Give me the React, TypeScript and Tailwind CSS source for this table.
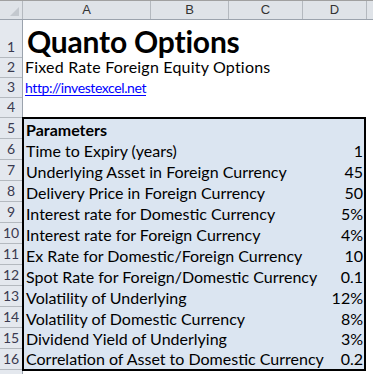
import React from "react";

const rows: [string, string][] = [
  ["Time to Expiry (years)", "1"],
  ["Underlying Asset in Foreign Currency", "45"],
  ["Delivery Price in Foreign Currency", "50"],
  ["Interest rate for Domestic Currency", "5%"],
  ["Interest rate for Foreign Currency", "4%"],
  ["Ex Rate for Domestic/Foreign Currency", "10"],
  ["Spot Rate for Foreign/Domestic Currency", "0.1"],
  ["Volatility of Underlying", "12%"],
  ["Volatility of Domestic Currency", "8%"],
  ["Dividend Yield of Underlying", "3%"],
  ["Correlation of Asset to Domestic Currency", "0.2"],
];

const rhHeights = [
  "h-[38px]",
  "h-[20px]",
  "h-[20px]",
  "h-[20px]",
  "h-[21px]",
  "h-[21px]",
  "h-[21px]",
  "h-[21px]",
  "h-[21px]",
  "h-[21px]",
  "h-[21px]",
  "h-[21px]",
  "h-[21px]",
  "h-[21px]",
  "h-[21px]",
  "h-[21px]",
];

export default function App() {
  const font = { fontFamily: "Lato, 'Open Sans', sans-serif" };
  return (
    <div className="w-[373px] h-[374px] overflow-hidden bg-white" style={font}>
      {/* column header */}
      <div className="flex h-[20px] bg-[#dfe3e8] border-b border-[#9ba3ad] border-t border-t-[#a0a0a0] text-[13px] text-[#333]" style={{ fontFamily: "'Liberation Sans', Arial, sans-serif" }}>
        <div className="w-[23px] shrink-0 border-r border-[#b4b9bf] relative">
          <svg className="absolute right-[3px] bottom-[3px]" width="9" height="9" viewBox="0 0 9 9">
            <polygon points="9,0 9,9 0,9" fill="#c3c8ce" />
          </svg>
        </div>
        <div className="w-[128px] shrink-0 border-r border-[#b4b9bf] flex items-center justify-center">A</div>
        <div className="w-[78px] shrink-0 border-r border-[#b4b9bf] flex items-center justify-center">B</div>
        <div className="w-[74px] shrink-0 border-r border-[#b4b9bf] flex items-center justify-center">C</div>
        <div className="w-[64px] shrink-0 border-r border-[#b4b9bf] flex items-center justify-center">D</div>
        <div className="flex-1" />
      </div>
      <div className="flex">
        {/* row headers */}
        <div className="w-[23px] shrink-0 flex flex-col bg-[#e4e8ee] border-r border-[#9ba3ad] text-[14px] text-[#3a3a50]">
          {rhHeights.map((h, i) => (
            <div key={i} className={`${h} border-b border-[#b4b9bf] flex items-end justify-center pb-[1px] leading-none`}>
              <span className="pb-[2px]">{i + 1}</span>
            </div>
          ))}
          <div className="h-[20px]" />
        </div>
        {/* content */}
        <div className="flex-1 flex flex-col">
          <div className="h-[38px] flex items-end pl-[4px] pb-[2px]">
            <span className="text-[30px] font-bold text-black leading-none tracking-[-0.2px]">Quanto Options</span>
          </div>
          <div className="h-[20px] flex items-end pl-[2px] pb-[1px] text-[16px] text-black leading-[20px] tracking-[0.2px]">
            Fixed Rate Foreign Equity Options
          </div>
          <div className="h-[20px] flex items-end pl-[2px] text-[14px] leading-[20px]">
            <span className="text-[#0000ff] underline underline-offset-2 tracking-[-0.4px]">http://investexcel.net</span>
          </div>
          <div className="h-[19px]" />
          <div className="ml-[-1px] w-[344px] h-[254px] border-2 border-black bg-[#dbe5f1] flex flex-col text-[16px] text-black">
            <div className="h-[21px] flex items-end pl-[2px] leading-[21px] font-bold">Parameters</div>
            {rows.map(([label, val], i) => (
              <div key={i} className={`${i >= 9 ? "h-[20px]" : "h-[21px]"} flex items-end justify-between pl-[2px] pr-[1px] leading-[21px]`}>
                <span>{label}</span>
                <span>{val}</span>
              </div>
            ))}
          </div>
        </div>
      </div>
    </div>
  );
}
